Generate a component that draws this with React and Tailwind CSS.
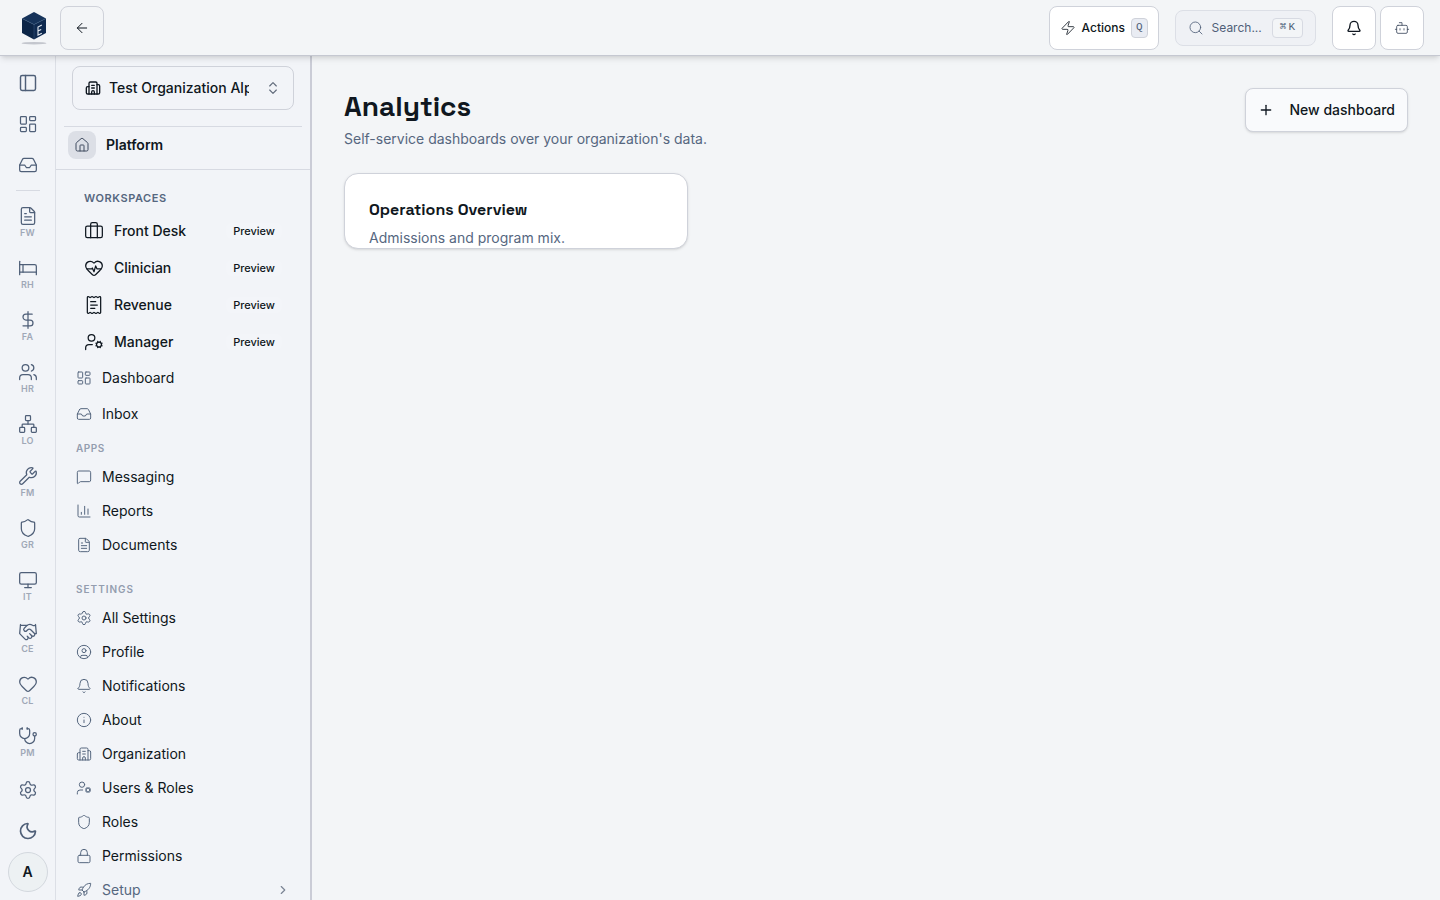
import {
  ArrowLeft, Bed, Bell, Bot, Briefcase, Building2, ChartColumn, ChevronRight, ChevronsUpDown, CircleUser,
  DollarSign, FileText, Handshake, Heart, HeartPulse, House, Inbox, Info, LayoutDashboard, Lock, MessageSquare,
  Monitor, Moon, Network, PanelLeft, Plus, ReceiptText, Rocket, Search, Settings, Shield, Stethoscope, UserCog,
  Users, Wrench, Zap,
} from "lucide-react";

const MODULES = [
  { code: "FW", icon: FileText },
  { code: "RH", icon: Bed },
  { code: "FA", icon: DollarSign },
  { code: "HR", icon: Users },
  { code: "LO", icon: Network },
  { code: "FM", icon: Wrench },
  { code: "GR", icon: Shield },
  { code: "IT", icon: Monitor },
  { code: "CE", icon: Handshake },
  { code: "CL", icon: Heart },
  { code: "PM", icon: Stethoscope },
];

const WORKSPACES = [
  { label: "Front Desk", icon: Briefcase },
  { label: "Clinician", icon: HeartPulse },
  { label: "Revenue", icon: ReceiptText },
  { label: "Manager", icon: UserCog },
];

const APPS = [
  { label: "Messaging", icon: MessageSquare },
  { label: "Reports", icon: ChartColumn },
  { label: "Documents", icon: FileText },
];

const SETTINGS = [
  { label: "All Settings", icon: Settings },
  { label: "Profile", icon: CircleUser },
  { label: "Notifications", icon: Bell },
  { label: "About", icon: Info },
  { label: "Organization", icon: Building2 },
  { label: "Users & Roles", icon: UserCog },
  { label: "Roles", icon: Shield },
  { label: "Permissions", icon: Lock },
];

const displayFont = "font-['Space_Grotesk',Inter,sans-serif]";
const headerBtn = "flex h-11 items-center justify-center rounded-lg border border-[#cfd2da]";

function Logo() {
  return (
    <svg width="28" height="36" viewBox="0 0 28 36" aria-hidden="true">
      <ellipse cx="14" cy="33.200" rx="12.5" ry="1.2" fill="#c3c6cd" />
      <path d="M14 2 26 8.5 14 14.500 2 8.5Z" fill="#16335a" />
      <path d="M2 8.5 14 14.500V29.500L2 23Z" fill="#0c2547" />
      <path d="M26 8.500 14 14.500V29.500L26 23Z" fill="#0f2a50" />
      <path d="M2 8.500 14 14.500 26 8.500M14 14.500V29" fill="none" stroke="#3b5b80" strokeWidth=".5" />
      <path d="M21.800 15 18 17V25.200L21.800 23.200M18 21 21.200 19.400" fill="none" stroke="#e5ebf2" strokeWidth="1.100" />
    </svg>
  );
}

function RailButton({ icon: Icon, label, strokeWidth = 1.5 }) {
  return (
    <button aria-label={label} className="flex size-10 shrink-0 items-center justify-center rounded-lg text-[#4f5f78]">
      <Icon size={20} strokeWidth={strokeWidth} />
    </button>
  );
}

function Rail() {
  return (
    <aside className="flex w-14 shrink-0 flex-col items-center gap-px border-r border-[#dcdfe6] bg-[#f2f4f8] pt-[7px] pb-2">
      <RailButton icon={PanelLeft} label="Toggle sidebar" strokeWidth={1.75} />
      <RailButton icon={LayoutDashboard} label="Dashboard" />
      <RailButton icon={Inbox} label="Inbox" />
      <hr className="mt-1 w-6 border-[#d7dae2]" />
      <nav className="mt-1.5 mb-[3px] flex flex-col gap-1">
        {MODULES.map(({ code, icon: Icon }) => (
          <a key={code} href="#" className="flex h-12 w-10 flex-col items-center justify-center gap-0.5 text-[#4f5f78]">
            <Icon size={20} strokeWidth={1.5} />
            <span className="text-[9px] leading-[10px] font-semibold tracking-wide text-[#a0a8b7]">{code}</span>
          </a>
        ))}
      </nav>
      <RailButton icon={Settings} label="Settings" />
      <RailButton icon={Moon} label="Dark mode" strokeWidth={2} />
      <button className="flex size-10 shrink-0 items-center justify-center rounded-full border border-[#d3d8de] bg-[#edf1f3] text-sm font-semibold">
        A
      </button>
    </aside>
  );
}

function NavItem({ icon: Icon, label, height = "h-[34px]" }) {
  return (
    <a href="#" className={`flex items-center gap-2.5 px-5 text-sm ${height}`}>
      <Icon size={16} strokeWidth={1.5} className="text-[#56677f]" />
      {label}
    </a>
  );
}

function Sidebar() {
  return (
    <aside className="w-64 shrink-0 overflow-hidden border-r-2 border-[#caccd6] bg-[#f2f4f8]">
      <div className="px-4 pt-2.5">
        <button className="flex h-11 w-full items-center rounded-lg border border-[#cfd2da] px-3 text-sm font-medium">
          <Building2 size={16} className="shrink-0" />
          <span className="ml-2 w-[140px] overflow-hidden text-left whitespace-nowrap">Test Organization Alpha</span>
          <ChevronsUpDown size={16} strokeWidth={1.75} className="ml-auto shrink-0 text-[#626c7c]" />
        </button>
      </div>
      <hr className="mx-2 mt-4 border-[#d7dae2]" />
      <div className="flex items-center gap-2.5 border-b border-[#d7dae2] px-3 pt-1 pb-2.5">
        <span className="flex size-7 items-center justify-center rounded-lg bg-[#dcdfe6]">
          <House size={16} strokeWidth={1.5} className="text-[#3f4b5f]" />
        </span>
        <span className="text-sm font-semibold">Platform</span>
      </div>

      <nav>
        {/* Workspaces */}
        <h2 className="mb-[7px] px-7 pt-5 text-[11px] leading-4 font-semibold tracking-wider text-[#56677f]">WORKSPACES</h2>
        <div className="flex flex-col gap-px">
          {WORKSPACES.map(({ label, icon: Icon }) => (
            <a key={label} href="#" className="flex h-9 items-center gap-2.5 px-7 text-sm font-medium">
              <Icon size={20} strokeWidth={1.5} />
              {label}
              <span className="ml-auto rounded-md bg-[#f3f5f9] px-[7px] text-[11px] leading-4">Preview</span>
            </a>
          ))}
        </div>
        <NavItem icon={LayoutDashboard} label="Dashboard" height="h-9" />
        <NavItem icon={Inbox} label="Inbox" height="h-9" />

        {/* Apps */}
        <h2 className="mb-1 px-5 pt-2 text-[10px] leading-4 font-semibold tracking-wider text-[#949daf]">APPS</h2>
        {APPS.map((item) => <NavItem key={item.label} {...item} />)}

        {/* Settings */}
        <h2 className="mb-1 px-5 pt-[19px] text-[10px] leading-4 font-semibold tracking-widest text-[#949daf]">SETTINGS</h2>
        {SETTINGS.map((item) => <NavItem key={item.label} {...item} />)}
        <button className="flex h-[34px] w-full items-center gap-2.5 px-5 text-sm text-[#56677f]">
          <Rocket size={16} strokeWidth={1.5} />
          Setup
          <ChevronRight size={14} className="ml-auto text-[#7b8494]" />
        </button>
      </nav>
    </aside>
  );
}

function Header() {
  return (
    <header className="relative z-10 flex h-14 shrink-0 items-center border-b border-[#c5c8d1] bg-[#f3f5f7] pr-4 pl-5 shadow-md">
      <a href="#" aria-label="Home" className="mr-3"><Logo /></a>
      <button aria-label="Back" className={`${headerBtn} w-11`}>
        <ArrowLeft size={16} strokeWidth={1.5} />
      </button>
      <button className={`${headerBtn} ml-auto gap-1.5 bg-white px-2.5 text-xs font-medium`}>
        <Zap size={16} strokeWidth={1.25} />
        Actions
        <kbd className="flex h-5 items-center rounded border border-[#cfd2da] bg-[#e9ecf3] px-1 font-['Liberation_Mono',monospace] text-[11px] text-[#4f5f78]">Q</kbd>
      </button>
      <button className="ml-4 flex h-9 items-center gap-2 rounded-lg border border-[#dcdfe6] bg-[#eff1f5] px-3 text-xs text-[#4f5f78]">
        <Search size={16} strokeWidth={1.25} />
        Search...
        <kbd className="ml-0.5 flex h-5 items-center gap-0.5 rounded border border-[#d7dae2] bg-[#f3f5f7] px-[7px] font-['Liberation_Mono',monospace] text-[11px]">
          <span>⌘</span>
          <span>K</span>
        </kbd>
      </button>
      <button aria-label="Notifications" className={`${headerBtn} ml-4 w-11 bg-white`}>
        <Bell size={16} />
      </button>
      <button aria-label="Assistant" className={`${headerBtn} ml-1 w-11 bg-white`}>
        <Bot size={16} strokeWidth={1.25} className="text-[#3f4b5f]" />
      </button>
    </header>
  );
}

export default function App() {
  return (
    <div className="flex h-screen flex-col overflow-hidden bg-[#f3f5f7] font-[Inter,sans-serif] text-[#0f1720]">
      <Header />
      <div className="flex min-h-0 flex-1">
        <Rail />
        <Sidebar />
        <main className="min-w-0 flex-1 p-8">
          <div className="flex items-start justify-between">
            <div>
              <h1 className={`${displayFont} text-[28px] leading-9 font-semibold`}>Analytics</h1>
              <p className="mt-[5px] text-sm text-[#56677f]">Self-service dashboards over your organization's data.</p>
            </div>
            <button className="flex h-11 items-center gap-4 rounded-lg border border-[#cfd2da] bg-[#f9fafc] px-3 text-sm font-medium shadow-sm">
              <Plus size={16} />
              New dashboard
            </button>
          </div>
          <div className="mt-6 grid grid-cols-3 gap-4">
            <a href="#" className="block h-19 overflow-hidden rounded-[14px] border border-[#cfd2da] bg-white p-6 shadow-sm">
              <h2 className={`${displayFont} text-base font-semibold`}>Operations Overview</h2>
              <p className="mt-1.5 text-sm text-[#56677f]">Admissions and program mix.</p>
            </a>
          </div>
        </main>
      </div>
    </div>
  );
}
